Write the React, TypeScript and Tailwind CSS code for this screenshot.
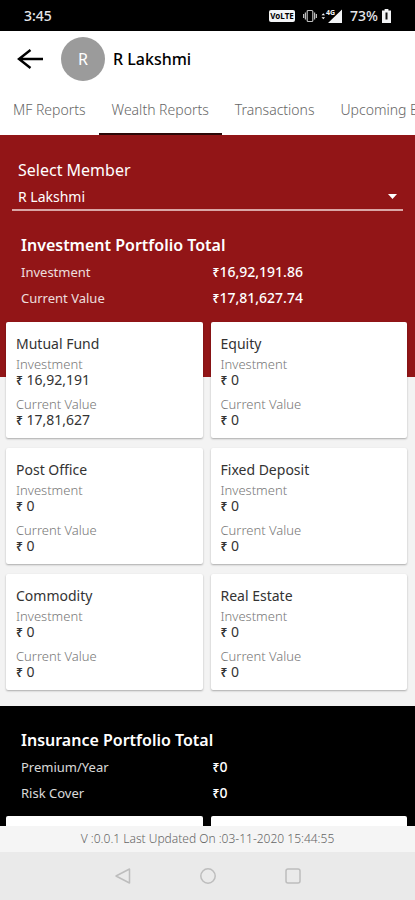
import { useState } from 'react'

interface Amount {
  label: string
  value: string
}

interface Holding {
  name: string
  investment: string
  current: string
}

const tabs = ['MF Reports', 'Wealth Reports', 'Transactions', 'Upcoming Events']

const totals: Amount[] = [
  { label: 'Investment', value: '16,92,191.86' },
  { label: 'Current Value', value: '17,81,627.74' },
]

const insurance: Amount[] = [
  { label: 'Premium/Year', value: '0' },
  { label: 'Risk Cover', value: '0' },
]

const holdings: Holding[] = [
  { name: 'Mutual Fund', investment: '16,92,191', current: '17,81,627' },
  { name: 'Equity', investment: '0', current: '0' },
  { name: 'Post Office', investment: '0', current: '0' },
  { name: 'Fixed Deposit', investment: '0', current: '0' },
  { name: 'Commodity', investment: '0', current: '0' },
  { name: 'Real Estate', investment: '0', current: '0' },
]

function StatusBar() {
  return (
    <div className="flex h-[31px] shrink-0 items-center justify-between bg-black px-6 text-sm font-medium text-gray-200">
      <span>3:45</span>
      <div className="flex items-center">
        <span className="mr-2 flex h-3 w-[26px] items-center justify-center rounded-xs bg-gray-100 text-[8px] font-bold text-black">
          VoLTE
        </span>
        <svg className="mr-1 h-[14px] w-[14px]" viewBox="0 0 14 14" fill="none" stroke="#bdbdbd" strokeWidth="1.2">
          <rect x="4.2" y="1.5" width="5.6" height="11" rx="1" />
          <path d="M2.4 3.5v7M11.6 3.5v7M.6 5v4M13.4 5v4" />
        </svg>
        <svg className="mr-2 h-[14px] w-[21px]" viewBox="0 0 21 14" fill="#f3f4f6">
          <path d="M.5 6.3 2.3 4.2l1.8 2.1zM.5 8.2h3.6l-1.8 2.1zM21 .5V14H7z" />
          <text x="5" y="6" fontSize="7" fontWeight="700">
            4G
          </text>
        </svg>
        <span className="mr-1">73%</span>
        <svg className="h-[14px] w-[9px]" viewBox="0 0 9 14">
          <path d="M2.6 0h3.8v1.5H9V14H0V1.5h2.6z" fill="#f3f4f6" />
          <path d="M4.5 3.5v7" stroke="#111" strokeWidth="2" />
        </svg>
      </div>
    </div>
  )
}

function Rupee() {
  return <span className="text-xs leading-none font-semibold">₹</span>
}

function Summary({ title, rows }: { title: string; rows: Amount[] }) {
  return (
    <div className="px-[21px] text-white">
      <h2 className="mb-[2px] text-base leading-6 font-semibold">{title}</h2>
      <dl>
        {rows.map((row) => (
          <div key={row.label} className="grid grid-cols-2 gap-[10px]">
            <dt className="text-[13px] leading-[26px] opacity-85">{row.label}</dt>
            <dd className="text-sm leading-[26px] font-medium">
              <Rupee />
              {row.value}
            </dd>
          </div>
        ))}
      </dl>
    </div>
  )
}

function HoldingCard({ holding }: { holding: Holding }) {
  return (
    <article className="rounded-xs bg-white px-[10px] pt-3 pb-[10px] text-sm text-[#333] shadow-[0_1px_2px_rgba(0,0,0,0.3)]">
      <h3 className="mb-[2px] leading-5">{holding.name}</h3>
      <p className="text-[13px] leading-4 font-light text-[#777]">Investment</p>
      <p className="mb-2 leading-4">
        <Rupee /> {holding.investment}
      </p>
      <p className="text-[13px] leading-4 font-light text-[#777]">Current Value</p>
      <p className="leading-4">
        <Rupee /> {holding.current}
      </p>
    </article>
  )
}

export default function App() {
  const [active, setActive] = useState('Wealth Reports')

  return (
    <div className="flex h-screen flex-col overflow-hidden bg-[#f3f3f3] font-['Noto_Sans',sans-serif]">
      <StatusBar />
      <header className="shrink-0 bg-white">
        <div className="flex h-14 items-center pl-4">
          <button type="button" aria-label="Back">
            <svg className="h-7 w-7" viewBox="0 0 28 28" fill="none" stroke="#000" strokeWidth="2.4">
              <path d="M27 14H3M14.5 5 3 14l11.5 9" />
            </svg>
          </button>
          <span className="ml-[17px] flex h-11 w-11 items-center justify-center rounded-full bg-[#9b9b9b] text-base text-white">
            R
          </span>
          <h1 className="ml-2 text-base font-medium text-black">R Lakshmi</h1>
        </div>
        <nav className="flex h-12 overflow-x-auto overflow-y-hidden [scrollbar-width:none]">
          {tabs.map((tab) => (
            <button
              key={tab}
              type="button"
              onClick={() => setActive(tab)}
              className={`shrink-0 border-b-2 px-[13px] text-sm font-light whitespace-nowrap text-[#666] ${
                tab === active ? 'border-[#2a0808]' : 'border-transparent'
              }`}
            >
              {tab}
            </button>
          ))}
        </nav>
      </header>

      <main className="min-h-0 flex-1 overflow-y-auto [scrollbar-width:none]">
        <section className="bg-[#921517] pt-[23px] pb-[66px]">
          <div className="relative mx-3 mb-[22px] text-white">
            <label htmlFor="member" className="block px-[6px] leading-6">
              Select Member
            </label>
            <select
              id="member"
              className="mt-[3px] block h-[26px] w-full appearance-none border-b-2 border-[#d9a6a6] bg-transparent px-[6px] text-sm outline-none"
            >
              <option>R Lakshmi</option>
            </select>
            <svg className="pointer-events-none absolute right-[6px] bottom-3 h-[5px] w-[9px]" viewBox="0 0 9 5" fill="#fff">
              <path d="M0 0h9L4.500 5z" />
            </svg>
          </div>
          <Summary title="Investment Portfolio Total" rows={totals} />
        </section>
        <div className="-mt-[55px] grid grid-cols-2 gap-x-2 gap-y-[10px] pr-2 pb-4 pl-[6px]">
          {holdings.map((holding) => (
            <HoldingCard key={holding.name} holding={holding} />
          ))}
        </div>

        <section className="bg-black pt-[22px]">
          <Summary title="Insurance Portfolio Total" rows={insurance} />
          <div className="grid grid-cols-2 gap-x-2 pt-[10px] pr-2 pl-[6px]">
            <div className="h-28 rounded-xs bg-white" />
            <div className="h-28 rounded-xs bg-white" />
          </div>
        </section>
      </main>

      <footer className="shrink-0">
        <p className="bg-[#f5f5f5] text-center text-xs leading-[26px] font-light text-[#666]">
          V :0.0.1 Last Updated On :03-11-2020 15:44:55
        </p>
        <div className="flex h-12 items-center justify-center gap-[69px] bg-[#eaeaea] text-[#bdbdbd]">
          <button type="button" aria-label="System back">
            <svg className="h-4 w-4" viewBox="0 0 16 16" fill="none" stroke="currentColor" strokeWidth="1.5" strokeLinejoin="round">
              <path d="M14.500 1v14L1 8z" />
            </svg>
          </button>
          <button type="button" aria-label="Home">
            <svg className="h-4 w-4" viewBox="0 0 16 16" fill="none" stroke="currentColor" strokeWidth="1.5">
              <circle cx="8" cy="8" r="7.200" />
            </svg>
          </button>
          <button type="button" aria-label="Recent apps">
            <svg className="h-4 w-4" viewBox="0 0 16 16" fill="none" stroke="currentColor" strokeWidth="1.5">
              <rect x="1" y="1" width="14" height="14" rx="2" />
            </svg>
          </button>
        </div>
      </footer>
    </div>
  )
}
